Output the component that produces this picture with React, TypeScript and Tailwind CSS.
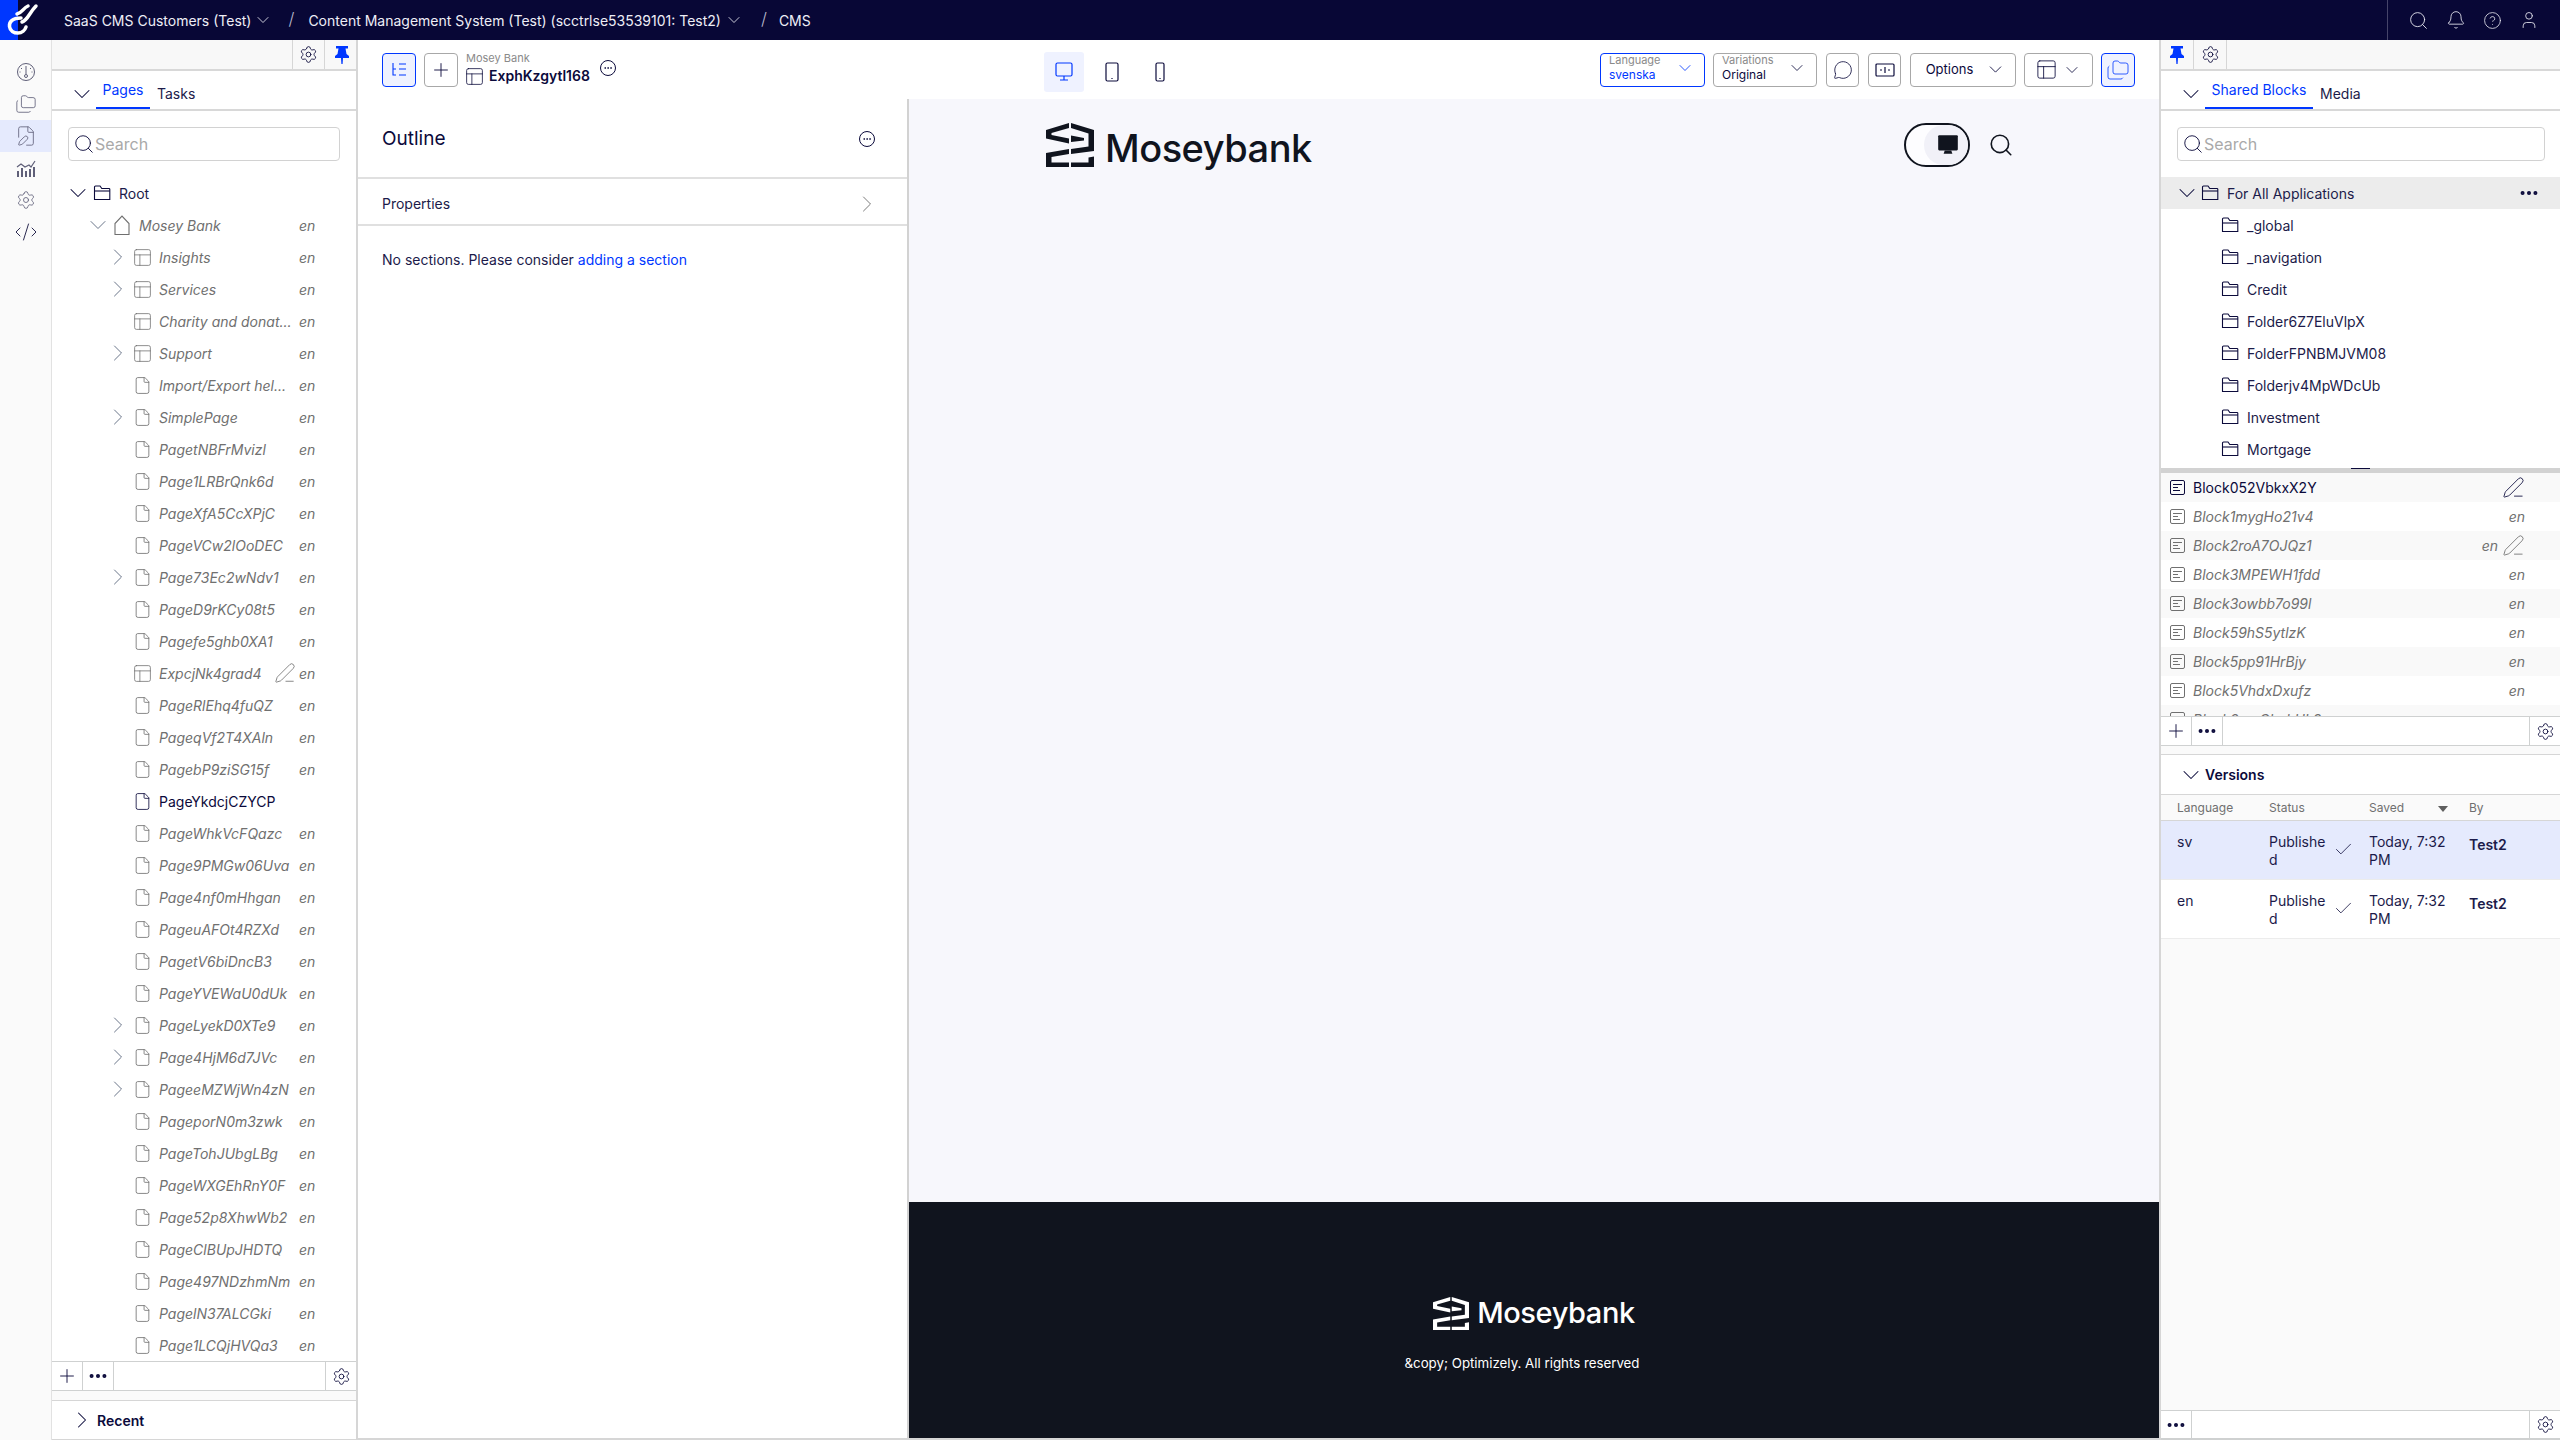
import {
  Bell,
  Check,
  ChevronDown,
  ChevronRight,
  CircleHelp,
  CodeXml,
  Ellipsis,
  File,
  FilePen,
  Folders,
  MessageCircle,
  PanelsTopLeft,
  PenLine,
  Plus,
  Search,
  Settings,
  User,
} from "lucide-react";

const ink = "#0b0a3b";

type Kind = "file" | "layout" | "home";
type TreeItem = {
  name: string;
  kind: Kind;
  level: number;
  arrow?: "open" | "closed";
  selected?: boolean;
  pencil?: boolean;
};

const page = (name: string, arrow?: "closed"): TreeItem => ({ name, kind: "file", level: 2, arrow });
const layout = (name: string, arrow?: "closed"): TreeItem => ({ name, kind: "layout", level: 2, arrow });

const tree: TreeItem[] = [
  { name: "Mosey Bank", kind: "home", level: 1, arrow: "open" },
  layout("Insights", "closed"),
  layout("Services", "closed"),
  layout("Charity and donat..."),
  layout("Support", "closed"),
  page("Import/Export hel..."),
  page("SimplePage", "closed"),
  page("PagetNBFrMvizl"),
  page("Page1LRBrQnk6d"),
  page("PageXfA5CcXPjC"),
  page("PageVCw2lOoDEC"),
  page("Page73Ec2wNdv1", "closed"),
  page("PageD9rKCy08t5"),
  page("Pagefe5ghb0XA1"),
  { name: "ExpcjNk4grad4", kind: "layout", level: 2, pencil: true },
  page("PageRlEhq4fuQZ"),
  page("PageqVf2T4XAln"),
  page("PagebP9ziSG15f"),
  { name: "PageYkdcjCZYCP", kind: "file", level: 2, selected: true },
  page("PageWhkVcFQazc"),
  page("Page9PMGw06Uva"),
  page("Page4nf0mHhgan"),
  page("PageuAFOt4RZXd"),
  page("PagetV6biDncB3"),
  page("PageYVEWaU0dUk"),
  page("PageLyekD0XTe9", "closed"),
  page("Page4HjM6d7JVc", "closed"),
  page("PageeMZWjWn4zN", "closed"),
  page("PageporN0m3zwk"),
  page("PageTohJUbgLBg"),
  page("PageWXGEhRnY0F"),
  page("Page52p8XhwWb2"),
  page("PageClBUpJHDTQ"),
  page("Page497NDzhmNm"),
  page("PagelN37ALCGki"),
  page("Page1LCQjHVQa3"),
];

const folders = ["_global", "_navigation", "Credit", "Folder6Z7EluVlpX", "FolderFPNBMJVM08", "Folderjv4MpWDcUb", "Investment", "Mortgage"];

const blocks = [
  { name: "Block052VbkxX2Y", active: true },
  { name: "Block1mygHo21v4" },
  { name: "Block2roA7OJQz1", pencil: true },
  { name: "Block3MPEWH1fdd" },
  { name: "Block3owbb7o99l" },
  { name: "Block59hS5ytlzK" },
  { name: "Block5pp91HrBjy" },
  { name: "Block5VhdxDxufz" },
  { name: "Block6gmOkphUL2" },
];

function Pin() {
  return (
    <svg width="16" height="20" viewBox="0 0 16 20" fill="#0037ff">
      <path d="M2 1h12v2.500h-2.500L12.500 9l2.500 2v2H9l-.4 6H7.400L7 13H1v-2l2.500-2 1-5.500H2z" />
    </svg>
  );
}

function FolderIcon({ color = ink }: { color?: string }) {
  return (
    <svg width="18" height="16" viewBox="0 0 18 16" fill="none" stroke={color} strokeWidth="1.100" className="shrink-0">
      <path d="M1.500 14.500V2a1 1 0 0 1 1-1h4.500l1.800 2.500H16a.8.8 0 0 1 .8.8v10.200z" />
      <path d="M1.500 6h15.300" />
    </svg>
  );
}

function HomeIcon() {
  return (
    <svg width="18" height="22" viewBox="0 0 18 22" fill="none" stroke="#6f6f6f" strokeWidth="1.100">
      <path d="M2 20.500V9.500L9 2l7 7.500v11z" />
    </svg>
  );
}

function BlockIcon({ color }: { color: string }) {
  return (
    <svg width="15" height="15" viewBox="0 0 15 15" fill="none" stroke={color} strokeWidth="1" className="shrink-0">
      <rect x="0.500" y="0.500" width="14" height="14" rx="1.500" />
      <path d="M3 4.500h9M3 7.500h5M3 10.500h7" />
    </svg>
  );
}

function GaugeIcon() {
  return (
    <svg width="20" height="20" viewBox="0 0 20 20" fill="none" stroke="#5f5f78" strokeWidth="1">
      <circle cx="10" cy="10" r="8.500" />
      <circle cx="10" cy="14" r="1.500" />
      <path d="M10 4v8M5 6l1 1M15 6l-1 1M3.500 10h1M15.500 10h1" />
    </svg>
  );
}

function ChartIcon() {
  return (
    <svg width="20" height="20" viewBox="0 0 20 20" fill="none" stroke="#5f5f78" strokeWidth="1.200">
      <path d="M1 9l4-3 4 3 4-2 2 2 4-6" />
      <path d="M2 19v-6M6 19V10M10 19v-6M14 19v-8M18 19V9" strokeWidth="2" />
    </svg>
  );
}

function Logo({ color, tall }: { color: string; tall?: boolean }) {
  return (
    <svg width={tall ? 48 : 36} height={tall ? 44 : 33} viewBox="0 0 48 44" fill={color} className="shrink-0">
      <polygon points="0,7 23,0 23,5 5.500,10 5.500,12 23,15.500 23,20.500 0,15.500" />
      <polygon points="23,26 0,30 0,44 23,44 23,39.500 5.500,39.500 5.500,34 23,31" />
      <polygon points="25,0 48,7 48,28 25,31 25,26 42.500,23.500 42.500,10.500 25,5" />
      <polygon points="25,12.500 38,15 38,17.500 25,19" />
      <polygon points="42.500,34.500 48,33.500 48,44 25,44 25,39.500 42.500,39.500" />
    </svg>
  );
}

function Chip({ children, className }: { children: React.ReactNode; className: string }) {
  return <div className={`flex h-[34px] items-center rounded-[4px] border border-[#a8a8a8] ${className}`}>{children}</div>;
}

function Drop({ label, value, color, border, width }: { label: string; value: string; color: string; border: string; width: string }) {
  return (
    <div className={`flex h-[34px] items-center justify-between rounded-[4px] border pl-2 pr-[9px] ${border} ${width}`}>
      <div className="-mt-[3px] flex flex-col">
        <span className="text-[11px] leading-[13px] text-[#8a8a8a]">{label}</span>
        <span className={`text-[12px] leading-[16px] ${color}`}>{value}</span>
      </div>
      <ChevronDown size={20} strokeWidth={1} className={`-mt-1 ${color}`} />
    </div>
  );
}

function PanelHeadCell({ children, border }: { children: React.ReactNode; border?: string }) {
  return <div className={`flex h-full w-[33px] items-center justify-center border-[#d6d6d6] ${border}`}>{children}</div>;
}

function FootBar({ add, className }: { add?: boolean; className?: string }) {
  return (
    <div className={`flex h-[30px] shrink-0 items-center border-y border-[#cfd1d1] bg-white ${className}`}>
      {add && (
        <div className="flex h-full w-[31px] items-center justify-center border-r border-[#cfd1d1]">
          <Plus size={22} strokeWidth={1} color={ink} />
        </div>
      )}
      <div className="flex h-full w-[31px] items-center justify-center border-r border-[#cfd1d1]">
        <Ellipsis size={22} strokeWidth={2.400} color={ink} />
      </div>
      <div className="ml-auto flex h-full w-[31px] items-center justify-center border-l border-[#cfd1d1]">
        <Settings size={19} strokeWidth={1.100} color={ink} />
      </div>
    </div>
  );
}

function Tabs({ active, other, activeWidth }: { active: string; other: string; activeWidth: string }) {
  return (
    <div className="flex h-[40px] shrink-0 items-end border-b-2 border-[#d8d8d8] pl-[21px]">
      <div className="mb-[5px] flex w-[18px] shrink-0 justify-center">
        <ChevronDown size={28} strokeWidth={0.900} color={ink} className="-my-1 shrink-0" />
      </div>
      <div className={`ml-[5px] flex h-[38px] flex-col items-center justify-center border-b-[2px] border-[#0037ff] pt-[1px] text-[14px] text-[#0037ff] ${activeWidth}`}>
        {active}
      </div>
      <div className="mb-[5px] ml-[7px] text-[14px] text-[#1c1b4a]">{other}</div>
    </div>
  );
}

function SearchBox({ className }: { className: string }) {
  return (
    <div className={`flex h-[34px] items-center rounded-[4px] border border-[#d2d2d2] bg-white pl-[4px] ${className}`}>
      <Search size={22} strokeWidth={1} color={ink} className="shrink-0" />
      <span className="text-[16px] text-[#a9a9a9]">Search</span>
    </div>
  );
}

function TreeRow({ item }: { item: TreeItem }) {
  const col = item.selected ? ink : "#707070";
  const arrow = "#5f6b80";
  return (
    <div className="flex h-8 items-center" style={{ paddingLeft: 16 + 20 * item.level }}>
      <div className="flex w-5 shrink-0 justify-center">
        {item.arrow === "open" && <ChevronDown size={28} strokeWidth={0.800} color={arrow} className="-my-1 shrink-0" />}
        {item.arrow === "closed" && <ChevronRight size={28} strokeWidth={0.800} color={arrow} className="-my-1 shrink-0" />}
      </div>
      <div className="ml-1 flex w-5 shrink-0 justify-center">
        {item.kind === "home" && <HomeIcon />}
        {item.kind === "layout" && <PanelsTopLeft size={21} strokeWidth={0.900} color="#707070" className="shrink-0" />}
        {item.kind === "file" && <File size={19} strokeWidth={1.050} color={col} className="shrink-0" />}
      </div>
      <div className="ml-[7px] min-w-0 flex-1 truncate text-[14px]" style={{ color: col, fontStyle: item.selected ? "normal" : "italic" }}>
        {item.name}
      </div>
      {item.pencil && <PenLine size={22} strokeWidth={0.900} color="#707070" className="-my-1 -mr-[3px] shrink-0" />}
      <div className="ml-[6px] mr-[40px] w-[17px] shrink-0 text-[14px] italic text-[#707070]">{item.selected ? "" : "en"}</div>
    </div>
  );
}

function VersionRow({ lang, active }: { lang: string; active?: boolean }) {
  return (
    <div className={`flex h-[59px] shrink-0 items-start border-b border-[#ececec] pl-4 text-[14px] leading-[18px] text-[#1c1b4a] ${active ? "bg-[#e5eafd]" : "bg-white"}`}>
      <div className="w-[92px] pt-[12px]">{lang}</div>
      <div className="w-[58px] break-all pt-[12px]">Published</div>
      <div className="flex w-[42px] pl-[6px] pt-[18px]">
        <Check size={21} strokeWidth={0.900} color={ink} />
      </div>
      <div className="w-[100px] pt-[12px]">Today, 7:32 PM</div>
      <div className="pt-[15px] font-semibold">Test2</div>
    </div>
  );
}

export default function App() {
  return (
    <div className="flex h-screen w-full flex-col overflow-hidden bg-white font-['Inter',sans-serif] text-[14px]">
      {/* top bar */}
      <div className="flex h-10 shrink-0 items-center bg-[#080736] text-[14px] text-[#eeeef6]">
        <div className="relative h-10 w-[52px] shrink-0 overflow-hidden">
          <div className="absolute left-0 top-0 h-10 w-[18px] bg-[#0037ff]" />
          <svg width="52" height="40" viewBox="0 0 52 40" fill="none" stroke="white" strokeWidth="3.500" strokeLinecap="round" className="absolute left-0 top-0">
            <path d="M21 18C12 18 9 22 9.500 26.500 10 31 14 33 18 33c4 0 7-3 8-6" />
            <path d="M17 14c5-1 6-6 11-8M22 22c6-2 7-9 14-16" />
          </svg>
        </div>
        <span className="ml-3">SaaS CMS Customers (Test)</span>
        <ChevronDown size={20} strokeWidth={1} className="ml-[2px]" />
        <span className="ml-[15px] text-[17px] font-light text-[#b8b8cc]">/</span>
        <span className="ml-[14px]">Content Management System (Test) (scctrlse53539101: Test2)</span>
        <ChevronDown size={20} strokeWidth={1} className="ml-[3px]" />
        <span className="ml-[17px] text-[17px] font-light text-[#b8b8cc]">/</span>
        <span className="ml-[12px]">CMS</span>
        <div className="ml-auto flex h-10 items-center border-l border-[#45446a] pl-[20px] pr-[21px]">
          <Search size={21} strokeWidth={1} />
          <Bell size={20} strokeWidth={1} className="ml-[17px]" />
          <CircleHelp size={19} strokeWidth={1} className="ml-[17px]" />
          <User size={20} strokeWidth={1} className="ml-[17px]" />
        </div>
      </div>

      <div className="flex min-h-0 flex-1">
        {/* icon rail */}
        <div className="flex w-[52px] shrink-0 flex-col items-stretch border-r border-[#e2e2e2] bg-[#fafafa] pt-4">
          <div className="flex h-8 items-center justify-center"><GaugeIcon /></div>
          <div className="flex h-8 items-center justify-center"><Folders size={22} strokeWidth={0.900} color="#5f5f78" /></div>
          <div className="flex h-8 items-center justify-center bg-[#e5eafd]"><FilePen size={22} strokeWidth={0.900} color="#5f5f78" /></div>
          <div className="flex h-8 items-center justify-center"><ChartIcon /></div>
          <div className="flex h-8 items-center justify-center"><Settings size={20} strokeWidth={1} color="#5f5f78" /></div>
          <div className="flex h-8 items-center justify-center"><CodeXml size={24} strokeWidth={1} color="#2a2950" /></div>
        </div>

        {/* pages panel */}
        <div className="flex w-[306px] shrink-0 flex-col border-r-2 border-[#d6d6d6]">
          <div className="flex h-[31px] shrink-0 items-center justify-end border-b-2 border-[#d8d8d8] bg-[#f8f8f8]">
            <PanelHeadCell border="border-x"><Settings size={19} strokeWidth={1.100} color={ink} /></PanelHeadCell>
            <PanelHeadCell border="-mr-[2px]"><Pin /></PanelHeadCell>
          </div>
          <Tabs active="Pages" other="Tasks" activeWidth="w-[54px]" />
          <div className="flex min-h-0 flex-1 flex-col pt-4">
            <SearchBox className="mx-4 w-[272px] shrink-0" />
            <div className="mt-4 min-h-0 flex-1 overflow-hidden">
              <div className="flex h-8 items-center pl-4">
                <div className="flex w-5 justify-center"><ChevronDown size={28} strokeWidth={0.900} color={ink} className="-my-1 shrink-0" /></div>
                <div className="ml-1 flex w-5 justify-center"><FolderIcon /></div>
                <span className="ml-[7px] text-[#1c1b4a]">Root</span>
              </div>
              {tree.map((item) => (
                <TreeRow key={item.name} item={item} />
              ))}
            </div>
          </div>
          <FootBar add />
          <div className="h-[9px] shrink-0 bg-[#fafafa]" />
          <div className="flex h-[40px] shrink-0 items-center border-y border-[#d6d6d6] pl-[20px] font-semibold text-[#0b0a3b]">
            <div className="flex w-5 justify-center"><ChevronRight size={28} strokeWidth={0.900} color={ink} className="-my-1 shrink-0" /></div>
            <span className="ml-[5px]">Recent</span>
          </div>
        </div>

        {/* editor */}
        <div className="flex min-w-0 flex-1 flex-col">
          <div className="flex h-[59px] shrink-0 items-center">
            <div className="flex h-[34px] w-[550px] shrink-0 items-center pl-6">
              <div className="flex h-[34px] w-[34px] items-center justify-center rounded-[4px] border border-[#0037ff] bg-[#eff2ff]">
                <svg width="18" height="18" viewBox="0 0 18 18" fill="none" stroke="#0037ff" strokeWidth="1.100">
                  <path d="M3 2v12h3M3 8h3M9 3h7M9 8h7M9 14h7" />
                </svg>
              </div>
              <Chip className="ml-2 w-[34px] justify-center">
                <Plus size={22} strokeWidth={1} color={ink} />
              </Chip>
              <div className="-mt-[2px] ml-2 flex flex-col">
                <span className="text-[11px] leading-[13px] text-[#8a8a8a]">Mosey Bank</span>
                <div className="mt-[2px] flex items-center gap-[4px]">
                  <PanelsTopLeft size={21} strokeWidth={0.900} color={ink} className="-my-1 -ml-[2px]" />
                  <span className="text-[14px] font-semibold leading-[18px] text-[#0b0a3b]">ExphKzgytl168</span>
                </div>
              </div>
              <div className="mb-[3px] ml-[10px] flex size-4 items-center justify-center rounded-full border border-[#0b0a3b]">
                <Ellipsis size={10} strokeWidth={2} color={ink} />
              </div>
            </div>
            <div className="ml-[136px] mt-1 flex h-10 items-center">
              <div className="flex h-10 w-10 items-center justify-center rounded-[3px] bg-[#eff2ff]">
                <svg width="18" height="20" viewBox="0 0 18 20" fill="none" stroke="#0037ff" strokeWidth="1.200">
                  <rect x="1" y="1" width="16" height="13" rx="1.500" />
                  <path d="M9 14v4M5 18h8" />
                </svg>
              </div>
              <div className="ml-[8px] flex w-10 justify-center">
                <svg width="14" height="20" viewBox="0 0 14 20" fill="none" stroke={ink} strokeWidth="1.200">
                  <rect x="1" y="1" width="12" height="18" rx="1.500" />
                  <path d="M7 16v1" />
                </svg>
              </div>
              <div className="ml-[8px] flex w-10 justify-center">
                <svg width="10" height="20" viewBox="0 0 10 20" fill="none" stroke={ink} strokeWidth="1.200">
                  <rect x="1" y="1" width="8" height="18" rx="1.500" />
                  <path d="M5 16v1" />
                </svg>
              </div>
            </div>
            <div className="ml-auto flex items-center gap-2 pr-6">
              <Drop label="Language" value="svenska" color="text-[#0037ff]" border="border-[#0037ff]" width="w-[105px]" />
              <Drop label="Variations" value="Original" color="text-[#0b0a3b]" border="border-[#a8a8a8]" width="w-[104px]" />
              <Chip className="ml-[1px] w-[33px] justify-center">
                <MessageCircle size={20} strokeWidth={1} color={ink} />
              </Chip>
              <Chip className="ml-[1px] w-[33px] justify-center">
                <svg width="20" height="14" viewBox="0 0 20 14" fill="none" stroke={ink} strokeWidth="1.200">
                  <rect x="1" y="1" width="18" height="12" rx="1" />
                  <path d="M10 4v6M7 7H5M13 7h2" />
                </svg>
              </Chip>
              <Chip className="ml-[1px] w-[106px] justify-center gap-[12px] pl-[6px] text-[13px] text-[#0b0a3b]">
                Options
                <ChevronDown size={21} strokeWidth={1} />
              </Chip>
              <Chip className="w-[69px] justify-center gap-[4px]">
                <PanelsTopLeft size={23} strokeWidth={0.900} color={ink} />
                <ChevronDown size={20} strokeWidth={1} color={ink} />
              </Chip>
              <div className="flex h-[34px] w-[34px] items-center justify-center rounded-[4px] border border-[#0037ff] bg-[#eff2ff]">
                <Folders size={24} strokeWidth={0.800} color="#0037ff" />
              </div>
            </div>
          </div>

          <div className="flex min-h-0 flex-1 border-b-2 border-[#d6d6d6]">
            {/* outline */}
            <div className="flex w-[551px] shrink-0 flex-col border-r-2 border-[#d2d2d2]">
              <div className="flex h-[80px] shrink-0 items-center justify-between border-b-2 border-[#e0e0e0] pl-6 pr-[32px] pt-[2px]">
                <span className="text-[19px] font-normal text-[#0b0a3b]">Outline</span>
                <div className="flex size-4 items-center justify-center rounded-full border border-[#0b0a3b]">
                  <Ellipsis size={10} strokeWidth={2} color={ink} />
                </div>
              </div>
              <div className="flex h-[47px] shrink-0 items-center justify-between border-b-2 border-[#e0e0e0] pl-6 pr-[26px] pt-[4px] text-[#1c1b4a]">
                Properties
                <ChevronRight size={28} strokeWidth={0.800} color="#707070" />
              </div>
              <p className="px-6 pt-[24px] text-[14px] leading-[20px] text-[#1c1b4a]">
                No sections. Please consider <span className="text-[#0037ff]">adding a section</span>
              </p>
            </div>

            {/* preview */}
            <div className="flex min-w-0 flex-1 flex-col bg-[#f7f7fc]">
              <div className="flex flex-1 items-start justify-between pl-[137px] pr-[145px] pt-[21px]">
                <div className="flex items-center gap-[11px]">
                  <Logo color="#10141e" tall />
                  <span className="mt-[6px] text-[38px] font-medium leading-[44px] tracking-[-0.5px] text-[#10141e]">Moseybank</span>
                </div>
                <div className="flex items-center gap-[18px] pt-[3px]">
                  <div className="flex h-[44px] w-[66px] items-center justify-end overflow-hidden rounded-full border-2 border-[#10141e] bg-[#fdfdff]">
                    <div className="flex h-full w-[44px] items-center justify-center rounded-full bg-[#f1f1f8] pl-[3px]">
                      <svg width="24" height="24" viewBox="0 0 22 22" fill="#10141e">
                        <path d="M3 2h16a1 1 0 0 1 1 1v12a1 1 0 0 1-1 1H3a1 1 0 0 1-1-1V3a1 1 0 0 1 1-1z" />
                        <path d="M8 16h6l1 3H7z" />
                      </svg>
                    </div>
                  </div>
                  <Search size={26} strokeWidth={1.500} color="#10141e" />
                </div>
              </div>
              <div className="flex h-[236px] shrink-0 flex-col items-center bg-[#10141e] pt-[93px] text-white">
                <div className="flex items-center gap-[8px]">
                  <Logo color="#ffffff" />
                  <span className="text-[29px] font-medium leading-[36px] tracking-[-0.4px]">Moseybank</span>
                </div>
                <p className="mr-[24px] mt-[22px] text-[13.300px] leading-[20px]">&amp;copy; Optimizely. All rights reserved</p>
              </div>
            </div>
          </div>
        </div>

        {/* assets panel */}
        <div className="flex w-[401px] shrink-0 flex-col border-l-2 border-[#d6d6d6] bg-white">
          <div className="flex h-[31px] shrink-0 items-center border-b-2 border-[#d8d8d8] bg-[#f8f8f8]">
            <PanelHeadCell border="border-r"><Pin /></PanelHeadCell>
            <PanelHeadCell border="border-r"><Settings size={19} strokeWidth={1.100} color={ink} /></PanelHeadCell>
          </div>
          <Tabs active="Shared Blocks" other="Media" activeWidth="w-[108px]" />
          <div className="shrink-0 pt-4">
            <SearchBox className="mx-4 w-[368px]" />
            <div className="mt-4 flex h-8 items-center bg-[#ececec] pl-[16px] pr-[20px] text-[#1c1b4a]">
              <div className="flex w-[20px] justify-center"><ChevronDown size={28} strokeWidth={0.900} color={ink} className="-my-1 shrink-0" /></div>
              <div className="ml-[4px]"><FolderIcon /></div>
              <span className="ml-[8px]">For All Applications</span>
              <Ellipsis size={22} strokeWidth={2.400} color={ink} className="ml-auto" />
            </div>
            {folders.map((f) => (
              <div key={f} className="flex h-8 items-center pl-[60px] text-[#1c1b4a]">
                <FolderIcon />
                <span className="ml-[8px]">{f}</span>
              </div>
            ))}
            <div className="mt-[3px] flex h-[5px] justify-center bg-[#d2d2d2]">
              <div className="h-[1px] w-[19px] bg-[#0b0a3b]" />
            </div>
          </div>
          <div className="h-[243px] shrink-0 overflow-hidden">
            {blocks.map((b, i) => (
              <div key={b.name} className={`flex h-[29px] items-center pl-[9px] pr-[35px] ${i % 2 === 0 ? "bg-[#f9f9f9]" : "bg-white"}`}>
                <BlockIcon color={b.active ? ink : "#707070"} />
                <span className={`ml-[8px] flex-1 ${b.active ? "text-[#0b0a3b]" : "italic text-[#707070]"}`}>{b.name}</span>
                {!b.active && <span className="italic text-[#707070]">en</span>}
                {(b.active || b.pencil) && (
                  <PenLine size={23} strokeWidth={0.900} color={b.active ? ink : "#707070"} className="-my-1 ml-[4px] shrink-0" />
                )}
              </div>
            ))}
          </div>
          <FootBar add />
          <div className="h-[9px] shrink-0 border-b border-[#d6d6d6] bg-[#fafafa]" />
          <div className="flex h-[40px] shrink-0 items-center border-b border-[#d6d6d6] pl-[21px] font-semibold text-[#0b0a3b]">
            <div className="flex w-[18px] justify-center"><ChevronDown size={28} strokeWidth={0.900} color={ink} className="-my-1 shrink-0" /></div>
            <span className="ml-[5px]">Versions</span>
          </div>
          <div className="flex h-[26px] shrink-0 items-center border-b border-[#d6d6d6] bg-[#fafafa] pl-4 text-[12px] text-[#707070]">
            <div className="w-[92px]">Language</div>
            <div className="w-[100px]">Status</div>
            <div className="flex w-[100px] items-center">
              Saved
              <svg width="10" height="6" viewBox="0 0 10 6" fill="#5f5f5f" className="ml-[34px] mt-[2px]">
                <path d="M0 0h10L5 6z" />
              </svg>
            </div>
            <div>By</div>
          </div>
          <VersionRow lang="sv" active />
          <VersionRow lang="en" />
          <div className="min-h-0 flex-1 bg-[#fafafa]" />
          <FootBar className="border-b-2" />
        </div>
      </div>
    </div>
  );
}
